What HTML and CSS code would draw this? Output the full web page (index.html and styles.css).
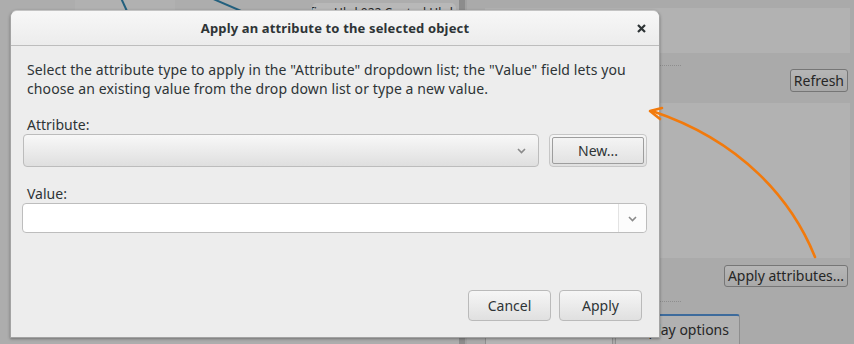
FILE: index.html
```html
<!DOCTYPE html>
<html>
<head>
<meta charset="utf-8">
<link rel="stylesheet" href="styles.css">
</head>
<body>
<div class="screen">
  <div class="canvas">
    <div class="node-hl"></div>
    <svg class="links" width="459" height="344" viewBox="0 0 459 344">
      <line x1="121" y1="-2" x2="131" y2="20" />
      <line x1="211" y1="-2" x2="262" y2="20" />
    </svg>
    <div class="node"><span class="node-text">Amplifier_Hbd 022 Control Hbd</span></div>
  </div>
  <div class="sep"></div>
  <div class="sidebar">
    <div class="panel panel-top"></div>
    <div class="band">
      <div class="dots"></div>
      <button class="bgbtn">Refresh</button>
    </div>
    <div class="panel panel-mid"></div>
    <div class="band band-low">
      <button class="bgbtn">Apply attributes...</button>
    </div>
    <div class="dots"></div>
    <div class="tabs">
      <div class="tab">Attributes</div>
      <div class="tab tab-active">Display options</div>
    </div>
  </div>

  <div class="dialog">
    <div class="titlebar">
      <span></span>
      <span class="title">Apply an attribute to the selected object</span>
      <span class="close">
        <svg width="9" height="9" viewBox="0 0 9 9"><path d="M1 1 L8 8 M8 1 L1 8" /></svg>
      </span>
    </div>
    <div class="content">
      <p class="desc">Select the attribute type to apply in the "Attribute" dropdown list; the "Value" field lets you<br>choose an existing value from the drop down list or type a new value.</p>
      <div class="lbl lbl-attr">Attribute:</div>
      <div class="attr-row">
        <div class="combo">
          <svg class="chev" width="9" height="6" viewBox="0 0 9 6"><path d="M1 1 L4.5 4.5 L8 1" /></svg>
        </div>
        <button class="btn btn-new"><span class="btn-inner">New...</span></button>
      </div>
      <div class="lbl lbl-val">Value:</div>
      <div class="entry-combo">
        <div class="entry"></div>
        <div class="entry-btn">
          <svg class="chev" width="9" height="6" viewBox="0 0 9 6"><path d="M1 1 L4.5 4.5 L8 1" /></svg>
        </div>
      </div>
      <div class="actions">
        <button class="btn btn-act">Cancel</button>
        <button class="btn btn-act">Apply</button>
      </div>
    </div>
  </div>

  <svg class="arrow" width="854" height="344" viewBox="0 0 854 344">
    <path class="arrow-curve" d="M815 257 C 792 200, 742 141, 652 111" />
    <path class="arrow-head" d="M660 119 L650 111 L662 108" />
  </svg>
</div>
</body>
</html>
```

FILE: styles.css
```css
* { box-sizing: border-box; }
html, body { margin: 0; padding: 0; }
body {
  width: 854px;
  height: 344px;
  overflow: hidden;
  font-family: "Noto Sans", "DejaVu Sans", sans-serif;
  font-size: 14px;
  color: #2e3436;
}

.screen {
  position: relative;
  width: 854px;
  height: 344px;
  display: grid;
  grid-template-columns: 459px 8px 1fr;
  background: #adadad;
  overflow: hidden;
}

/* ---------- background (dimmed application) ---------- */
.canvas {
  position: relative;
  background: #adadad;
  overflow: hidden;
}
.node-hl {
  position: absolute;
  left: 75px;
  top: 0;
  width: 100px;
  height: 14px;
  background: #b1b1b1;
}
.links { position: absolute; left: 0; top: 0; }
.links line { stroke: #23607e; stroke-width: 2; }
.node {
  position: absolute;
  left: 312px;
  top: 3px;
  width: 144px;
  height: 24px;
  border-radius: 5px;
  background: #b8b8b8;
  color: #262626;
  font-size: 12px;
  line-height: 14px;
  padding: 3px 3px 0 0;
  white-space: nowrap;
  overflow: hidden;
  display: flex;
  justify-content: flex-end;
}
.node-text { flex: none; }
.sep {
  background: #8c8c8c;
  border-right: 2px solid #a2a2a2;
}
.sidebar {
  display: flex;
  flex-direction: column;
  padding: 8px 4px 0 18px;
  background: #aaaaaa;
}
.panel { background: #b2b2b2; }
.panel-top { height: 45px; }
.panel-mid { height: 155px; }
.band {
  height: 50px;
  display: flex;
  flex-direction: column;
  align-items: flex-end;
}
.band .dots { align-self: flex-start; margin-top: 12px; }
.band .bgbtn { margin-top: 3px; }
.band-low { height: 43px; }
.band-low .bgbtn { margin-top: 7px; }
.dots {
  width: 196px;
  height: 1px;
  border-top: 1px dotted #8e8e8e;
}
.bgbtn {
  height: 23px;
  margin-right: 2px;
  padding: 0 3px;
  border: 1px solid #767676;
  border-radius: 3px;
  background: linear-gradient(#b6b6b6, #a8a8a8);
  font-family: inherit;
  font-size: 14px;
  color: #262626;
  line-height: 20px;
}
.band-low .bgbtn { height: 22px; }
.tabs {
  display: flex;
  gap: 2px;
  margin-top: 12px;
  align-items: flex-start;
}
.tab {
  width: 128px;
  height: 30px;
  margin-top: 4px;
  background: #b4b4b4;
  border: 1px solid #8e8e8e;
  border-bottom: none;
  text-align: center;
  line-height: 28px;
  color: #262626;
}
.tab-active {
  width: 125px;
  margin-top: 0;
  border-top: 2px solid #3d6b9c;
  background: #b1b1b1;
  border-radius: 3px 3px 0 0;
  text-align: left;
  padding-left: 12px;
}

/* ---------- dialog ---------- */
.dialog {
  position: absolute;
  left: 10px;
  top: 10px;
  width: 650px;
  height: 328px;
  display: flex;
  flex-direction: column;
  background: #ededed;
  border: 1px solid #a3a3a3;
  border-top-color: #c4c4c4;
  border-radius: 7px 7px 0 0;
  box-shadow: 0 1px 3px rgba(0, 0, 0, 0.35);
}
.titlebar {
  height: 35px;
  flex: none;
  display: grid;
  grid-template-columns: 36px 1fr 36px;
  align-items: center;
  background: linear-gradient(#f7f7f7, #ececec);
  border-bottom: 1px solid #bdbdbd;
  border-radius: 6px 6px 0 0;
}
.title {
  text-align: center;
  font-weight: bold;
  font-size: 13px;
  letter-spacing: 0.15px;
  color: #2e3436;
}
.close {
  display: flex;
  justify-content: center;
  align-items: center;
  padding-top: 1px;
}
.close path { stroke: #2e3436; stroke-width: 2.2; fill: none; }

.content {
  flex: 1;
  display: flex;
  flex-direction: column;
  padding: 14px 12px 16px 11px;
}
.desc {
  margin: 0 0 0 5px;
  line-height: 19px;
  letter-spacing: 0.1px;
  white-space: nowrap;
  color: #2e3436;
}
.lbl {
  margin-left: 5px;
  line-height: 19px;
  color: #2e3436;
}
.lbl-attr { margin-top: 17px; }
.lbl-val { margin-top: 17px; }

.attr-row {
  display: flex;
  gap: 10px;
  height: 33px;
}
.combo {
  flex: 1;
  margin-left: 1px;
  display: flex;
  justify-content: flex-end;
  align-items: center;
  padding-right: 12px;
  border: 1px solid #bcbcbc;
  border-radius: 4px;
  background: linear-gradient(#f8f8f8, #dfdfdf);
}
.chev path { stroke: #8a8a8a; stroke-width: 1.6; fill: none; }

.btn {
  font-family: inherit;
  font-size: 14px;
  color: #2e3436;
  border: 1px solid #bababa;
  border-radius: 4px;
  background: linear-gradient(#f6f6f6, #e0e0e0);
  padding: 0;
}
.btn-new {
  width: 98px;
  padding: 2px;
  border-color: #c6c6c6;
  display: flex;
}
.btn-inner {
  flex: 1;
  display: flex;
  align-items: center;
  justify-content: center;
  border: 1px solid #9d9d9d;
  border-radius: 2px;
  padding-bottom: 1px;
}

.entry-combo {
  height: 30px;
  display: flex;
  border: 1px solid #bdbdbd;
  border-radius: 4px;
  background: #ffffff;
}
.entry { flex: 1; }
.entry-btn {
  width: 28px;
  display: flex;
  align-items: center;
  justify-content: center;
  border-left: 1px solid #e3e3e3;
  background: #fcfcfc;
  border-radius: 0 4px 4px 0;
  padding-top: 1px;
}

.actions {
  margin-top: auto;
  display: flex;
  justify-content: flex-end;
  gap: 8px;
  padding-right: 5px;
}
.btn-act {
  width: 83px;
  height: 31px;
  padding-bottom: 1px;
}

/* ---------- annotation arrow ---------- */
.arrow {
  position: absolute;
  left: 0;
  top: 0;
  pointer-events: none;
}
.arrow path {
  stroke: #f27a0c;
  stroke-width: 2.6;
  fill: none;
  stroke-linecap: round;
  stroke-linejoin: round;
}
```
